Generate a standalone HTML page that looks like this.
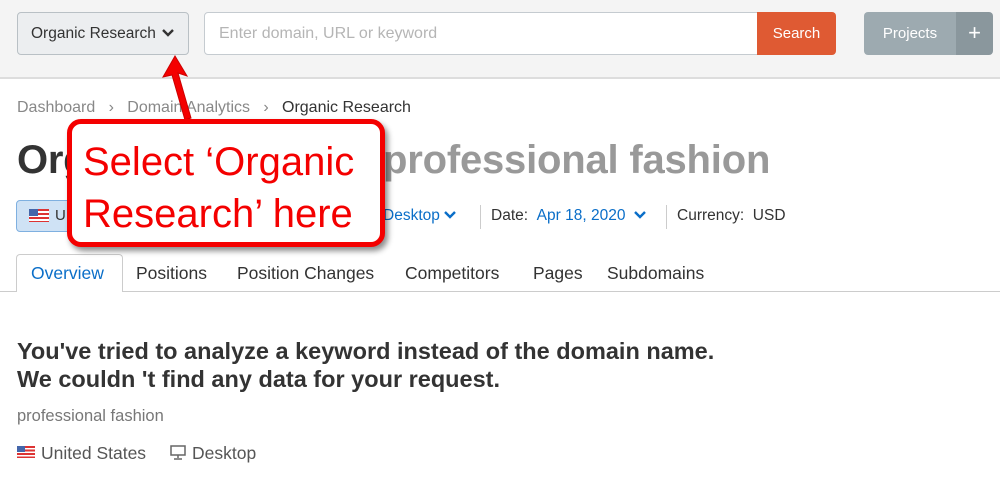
<!DOCTYPE html><html><head><style>
body{margin:0;width:1000px;height:487px;overflow:hidden;background:#fff;font-family:"Liberation Sans",sans-serif;position:relative;color:#333}
.a{position:absolute;white-space:nowrap}
.t{position:absolute;top:263px;font-size:17.5px;color:#333}
</style></head><body>
<div class="a" style="left:0;top:0;width:1000px;height:77px;background:#f4f4f4;border-bottom:2px solid #ddd"></div>
<div class="a" style="left:17px;top:12px;width:172px;height:43px;background:#eceef0;border:1px solid #b9c0c5;border-radius:4px;box-sizing:border-box;font-size:15.5px;line-height:41px;padding-left:13px;color:#333">Organic Research <svg width="12" height="10" style="margin-left:2px"><path d="M1 2l5 5 5-5" stroke="#333" stroke-width="2.4" fill="none"/></svg></div>
<div class="a" style="left:204px;top:12px;width:554px;height:43px;background:#fff;border:1px solid #c5cbd0;border-radius:4px 0 0 4px;box-sizing:border-box;font-size:16px;line-height:41px;padding-left:14px;color:#b5b5b5">Enter domain, URL or keyword</div>
<div class="a" style="left:757px;top:12px;width:79px;height:43px;background:#df5a33;border-radius:0 4px 4px 0;color:#fff;font-size:15px;line-height:43px;text-align:center">Search</div>
<div class="a" style="left:864px;top:12px;width:92px;height:43px;background:#9daab0;border-radius:4px 0 0 4px;color:#fff;font-size:15px;line-height:43px;text-align:center">Projects</div>
<div class="a" style="left:956px;top:12px;width:37px;height:43px;background:#8a979d;border-radius:0 4px 4px 0;color:#fff;font-size:22px;line-height:42px;text-align:center">+</div>
<div class="a" style="left:17px;top:99px;font-size:16px;color:#888">Dashboard &nbsp;&nbsp;›&nbsp;&nbsp; Domain Analytics &nbsp;&nbsp;›&nbsp;&nbsp; <span style="color:#333">Organic Research</span></div>
<div class="a" style="left:17px;top:138px;font-size:40px;font-weight:bold;color:#333;letter-spacing:-0.3px">Organic Research:</div>
<div class="a" style="left:383px;top:138px;font-size:40px;font-weight:bold;color:#999;letter-spacing:-0.2px">professional fashion</div>
<div class="a" style="left:16px;top:200px;width:120px;height:32px;background:#cfe2f5;border:1px solid #7fb0e0;border-radius:4px;box-sizing:border-box"></div>
<div class="a" style="left:29px;top:209px;width:20px;height:13px;background:repeating-linear-gradient(#d33 0 2px,#fff 2px 4px)"><div style="width:9px;height:7px;background:#46a"></div></div>
<div class="a" style="left:55px;top:207px;font-size:15px">U</div>
<div class="a" style="left:383px;top:207px;font-size:15.5px;color:#0a6ec8">Desktop <svg width="12" height="10"><path d="M1 2l5 5 5-5" stroke="#0a6ec8" stroke-width="2.4" fill="none"/></svg></div>
<div class="a" style="left:480px;top:205px;width:1px;height:24px;background:#ccc"></div>
<div class="a" style="left:491px;top:207px;font-size:15.5px">Date: &nbsp;<span style="color:#0a6ec8">Apr 18, 2020 &nbsp;<svg width="12" height="10"><path d="M1 2l5 5 5-5" stroke="#0a6ec8" stroke-width="2.4" fill="none"/></svg></span></div>
<div class="a" style="left:666px;top:205px;width:1px;height:24px;background:#ccc"></div>
<div class="a" style="left:677px;top:207px;font-size:15.5px">Currency: &nbsp;USD</div>
<div class="a" style="left:0;top:291px;width:1000px;height:1px;background:#ccc"></div>
<div class="a" style="left:16px;top:254px;width:107px;height:38px;background:#fff;border:1px solid #ccc;border-bottom:none;border-radius:4px 4px 0 0;box-sizing:border-box"></div>
<div class="t" style="left:31px;color:#0a6ec8">Overview</div>
<div class="t" style="left:136px">Positions</div>
<div class="t" style="left:237px">Position Changes</div>
<div class="t" style="left:405px">Competitors</div>
<div class="t" style="left:533px">Pages</div>
<div class="t" style="left:607px">Subdomains</div>
<div class="a" style="left:17px;top:337px;font-size:23.5px;font-weight:bold;line-height:28px;color:#333">You've tried to analyze a keyword instead of the domain name.<br>We couldn 't find any data for your request.</div>
<div class="a" style="left:17px;top:407px;font-size:16.5px;color:#777">professional fashion</div>
<div class="a" style="left:17px;top:446px;width:18px;height:12px;background:repeating-linear-gradient(#d33 0 2px,#fff 2px 3.5px)"><div style="width:8px;height:6px;background:#46a"></div></div>
<div class="a" style="left:41px;top:443px;font-size:17.5px;color:#555">United States</div>
<svg class="a" style="left:170px;top:445px" width="16" height="15"><rect x="1" y="1" width="14" height="9" fill="none" stroke="#666" stroke-width="1.5"/><path d="M8 10v3M4 14h8" stroke="#666" stroke-width="1.5"/></svg>
<div class="a" style="left:192px;top:443px;font-size:17.5px;color:#555">Desktop</div>
<svg class="a" style="left:150px;top:50px" width="60" height="80"><path d="M25 6L13 27l9-2 13 45 6-2-13-45 9 3z" fill="#f40000" stroke="#c00" stroke-width="1"/></svg>
<div class="a" style="left:67px;top:119px;width:318px;height:128px;border:5px solid #f40000;border-radius:14px;background:#fff;box-sizing:border-box;box-shadow:3px 4px 6px rgba(0,0,0,.45)"></div>
<div class="a" style="left:83px;top:136px;font-size:40px;line-height:52px;color:#f40000">Select ‘Organic<br>Research’ here</div>
</body></html>
